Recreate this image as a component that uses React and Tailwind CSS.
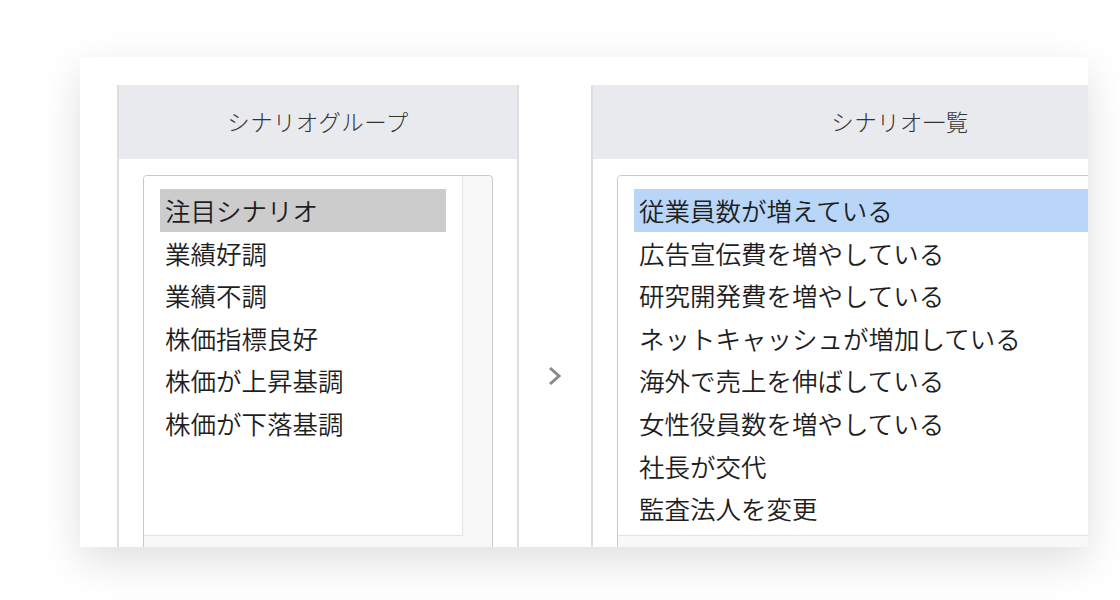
const groups = ["注目シナリオ", "業績好調", "業績不調", "株価指標良好", "株価が上昇基調", "株価が下落基調"];

const scenarios = [
  "従業員数が増えている",
  "広告宣伝費を増やしている",
  "研究開発費を増やしている",
  "ネットキャッシュが増加している",
  "海外で売上を伸ばしている",
  "女性役員数を増やしている",
  "社長が交代",
  "監査法人を変更",
];

function ListBox({ items, boxWidth, selectedClass }) {
  return (
    <div
      className="flex border border-[#c9c9c9] rounded-[4px] bg-[#f8f8f8] h-[400px] overflow-hidden"
      style={{ width: boxWidth }}
    >
      <div className="flex-1 h-[360px] bg-white border-r border-b border-[#e4e4e4] pt-[13px] px-[16px]">
        {items.map((item, i) => (
          <div
            key={item}
            className={`h-[42.6px] leading-[42.6px] pl-[5px] text-[25.5px] font-[350] text-[#1e1e1e] whitespace-nowrap ${
              i === 0 ? selectedClass : ""
            }`}
          >
            {item}
          </div>
        ))}
      </div>
      <div className="w-[29px] shrink-0" />
    </div>
  );
}

function Panel({ title, width, boxWidth, items, selectedClass }) {
  return (
    <div
      className="shrink-0 flex flex-col border-x-2 border-[#dedede] h-[480px]"
      style={{ width }}
    >
      <div className="h-[74px] shrink-0 bg-[#e9eaee] flex items-center justify-center text-[22.4px] font-light text-[#333] tracking-[0.5px]">
        {title}
      </div>
      <div className="shrink-0 px-[24px] pt-[16px]">
        <ListBox items={items} boxWidth={boxWidth} selectedClass={selectedClass} />
      </div>
    </div>
  );
}

export default function App() {
  return (
    <div
      className="w-[1120px] h-[600px] bg-white overflow-hidden pt-[57px] pl-[80px]"
      style={{ fontFamily: '"Noto Sans CJK JP", "Noto Sans", sans-serif' }}
    >
      <div className="w-[1008px] h-[490px] bg-white overflow-hidden shadow-[0_14px_40px_rgba(0,0,0,0.13)] pt-[28px] pl-[37px] flex">
        <Panel
          title="シナリオグループ"
          width={402}
          boxWidth={350}
          items={groups}
          selectedClass="bg-[#cccccc]"
        />
        <div className="w-[72px] shrink-0 flex justify-center pt-[280px]">
          <svg width="16" height="22" viewBox="0 0 16 22">
            <polyline
              points="3,3 12,11 3,19"
              fill="none"
              stroke="#8a8a8a"
              strokeWidth="3"
              strokeLinecap="butt"
              strokeLinejoin="miter"
            />
          </svg>
        </div>
        <Panel
          title="シナリオ一覧"
          width={618}
          boxWidth={566}
          items={scenarios}
          selectedClass="bg-[#b9d6f8]"
        />
      </div>
    </div>
  );
}
